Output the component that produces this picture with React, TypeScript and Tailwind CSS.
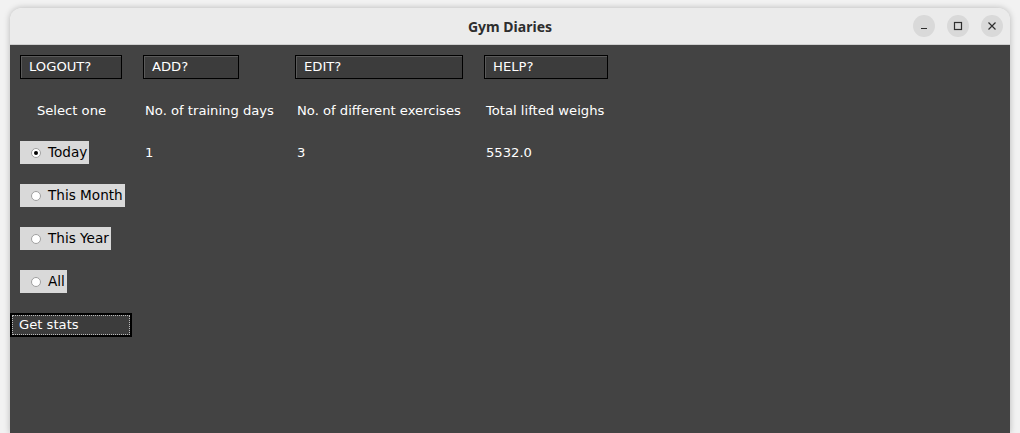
import React from "react";

const Btn = ({ label, w }: { label: string; w: string }) => (
  <div
    className={`ml-[10px] flex h-[24px] ${w} items-center border border-black bg-[#3c3c3c] pl-[8px] text-white shadow-[inset_1px_1px_0_#5a5a5a]`}
  >
    {label}
  </div>
);

const Radio = ({ label, checked }: { label: string; checked?: boolean }) => (
  <div className="ml-[10px] flex h-[23px] w-fit items-center bg-[#d9d9d9] pl-[11px] pr-[2px] text-[13.6px] text-black">
    <span className="flex h-[10px] w-[10px] items-center justify-center rounded-full border border-[#a0a0a0] bg-white">
      {checked && <span className="h-[4px] w-[4px] rounded-full bg-black" />}
    </span>
    <span className="ml-[7px]">{label}</span>
  </div>
);

export default function App() {
  return (
    <div
      className="h-[433px] w-[1020px] overflow-hidden bg-[#f2f2f2] pl-[10px] pr-[10px] pt-[8px]"
      style={{ fontFamily: '"DejaVu Sans", sans-serif' }}
    >
      <div className="flex h-full flex-col overflow-hidden rounded-t-[12px] shadow-[0_0_6px_rgba(0,0,0,0.25)]">
        {/* title bar */}
        <div className="relative flex h-[37px] shrink-0 items-center justify-center border-b border-[#cfcfcf] bg-[#ebebeb]">
          <span className="text-[14px] font-bold text-[#2e2e2e]" style={{ fontFamily: '"Noto Sans", sans-serif' }}>
            Gym Diaries
          </span>
          <div className="absolute right-[7px] top-[7px] flex gap-[12px]">
            <span className="flex h-[22px] w-[22px] items-center justify-center rounded-full bg-[#d9d9d9]">
              <svg width="10" height="10" viewBox="0 0 10 10">
                <path d="M2 7.5h6" stroke="#2e2e2e" strokeWidth="1.2" />
              </svg>
            </span>
            <span className="flex h-[22px] w-[22px] items-center justify-center rounded-full bg-[#d9d9d9]">
              <svg width="10" height="10" viewBox="0 0 10 10">
                <rect x="1.5" y="1.5" width="7" height="7" fill="none" stroke="#2e2e2e" strokeWidth="1.2" />
              </svg>
            </span>
            <span className="flex h-[22px] w-[22px] items-center justify-center rounded-full bg-[#d9d9d9]">
              <svg width="10" height="10" viewBox="0 0 10 10">
                <path d="M1.5 1.5l7 7M8.5 1.5l-7 7" stroke="#2e2e2e" strokeWidth="1.2" />
              </svg>
            </span>
          </div>
        </div>

        {/* content */}
        <div className="flex-1 bg-[#434343] pt-[10px] text-[13.15px] text-white">
          <div className="grid grid-cols-[123px_152px_189px_auto]">
            <Btn label="LOGOUT?" w="w-[102px]" />
            <Btn label="ADD?" w="w-[96px]" />
            <Btn label="EDIT?" w="w-[168px]" />
            <Btn label="HELP?" w="w-[124px]" />

            <div className="flex h-[62px] items-center justify-center pl-[10px] pr-[10px] pt-[2px] whitespace-nowrap">Select one</div>
            <div className="flex h-[62px] items-center pl-[12px] pt-[2px] whitespace-nowrap">No. of training days</div>
            <div className="flex h-[62px] items-center pl-[12px] pt-[2px] whitespace-nowrap">No. of different exercises</div>
            <div className="flex h-[62px] items-center pl-[12px] pt-[2px] whitespace-nowrap">Total lifted weighs</div>

            <div className="flex h-[23px] items-center">
              <Radio label="Today" checked />
            </div>
            <div className="flex h-[23px] items-center pl-[12px]">1</div>
            <div className="flex h-[23px] items-center pl-[12px]">3</div>
            <div className="flex h-[23px] items-center pl-[12px]">5532.0</div>
          </div>

          <div className="mt-[20px] flex flex-col gap-[20px]">
            <Radio label="This Month" />
            <Radio label="This Year" />
            <Radio label="All" />
          </div>

          <div className="mt-[20px] h-[24px] w-[122px] border-2 border-black bg-[#3c3c3c]">
            <div className="flex h-full items-center border border-dotted border-[#bbbbbb] pl-[6px]">Get stats</div>
          </div>
        </div>
      </div>
    </div>
  );
}
